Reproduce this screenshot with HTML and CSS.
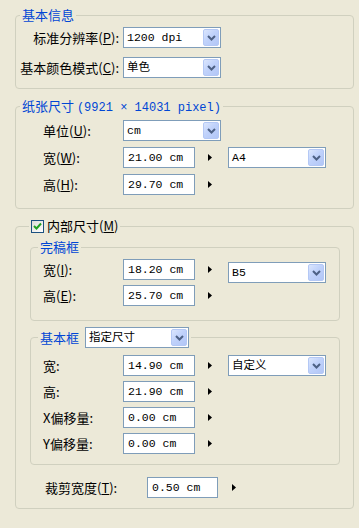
FILE: index.html
```html
<!DOCTYPE html>
<html lang="zh">
<head>
<meta charset="utf-8">
<link rel="stylesheet" href="styles.css">
</head>
<body>
<div class="page">

  <fieldset class="group g1">
    <legend class="lg">基本信息</legend>
    <div class="body b1">
      <div class="row">
        <span class="rlabel">标准分辨率(<u>P</u>):</span>
        <span class="select w98"><span class="val">1200 dpi</span><span class="btn"><svg width="9" height="6" viewBox="0 0 9 6"><path d="M1 1 L4.5 4.5 L8 1" fill="none" stroke="#4d6185" stroke-width="2"/></svg></span></span>
      </div>
      <div class="row">
        <span class="rlabel">基本颜色模式(<u>C</u>):</span>
        <span class="select w98"><span class="val">单色</span><span class="btn"><svg width="9" height="6" viewBox="0 0 9 6"><path d="M1 1 L4.5 4.5 L8 1" fill="none" stroke="#4d6185" stroke-width="2"/></svg></span></span>
      </div>
    </div>
  </fieldset>

  <fieldset class="group g2">
    <legend class="lg">纸张尺寸 <span class="mono">(9921 × 14031 pixel)</span></legend>
    <div class="body b2">
      <div class="row">
        <span class="label">单位(<u>U</u>):</span>
        <span class="select w98"><span class="val">cm</span><span class="btn"><svg width="9" height="6" viewBox="0 0 9 6"><path d="M1 1 L4.5 4.5 L8 1" fill="none" stroke="#4d6185" stroke-width="2"/></svg></span></span>
      </div>
      <div class="row">
        <span class="label">宽(<u>W</u>):</span>
        <span class="input">21.00 cm</span>
        <span class="arrow"><svg width="4" height="7" viewBox="0 0 4 7"><polygon points="0,0 4,3.5 0,7" fill="#000"/></svg></span>
        <span class="select w98"><span class="val">A4</span><span class="btn"><svg width="9" height="6" viewBox="0 0 9 6"><path d="M1 1 L4.5 4.5 L8 1" fill="none" stroke="#4d6185" stroke-width="2"/></svg></span></span>
      </div>
      <div class="row">
        <span class="label">高(<u>H</u>):</span>
        <span class="input">29.70 cm</span>
        <span class="arrow"><svg width="4" height="7" viewBox="0 0 4 7"><polygon points="0,0 4,3.5 0,7" fill="#000"/></svg></span>
      </div>
    </div>
  </fieldset>

  <fieldset class="group g3">
    <legend class="lg lg-check"><span class="check"><svg width="9" height="9" viewBox="0 0 9 9"><path d="M1 4 L3.5 6.5 L8 1.5" fill="none" stroke="#21a121" stroke-width="2"/></svg></span><span class="ctext">内部尺寸(<u>M</u>)</span></legend>
    <div class="body b3">

      <fieldset class="group inner g-wan">
        <legend class="lg lg-inner">完稿框</legend>
        <div class="body bi">
          <div class="row">
            <span class="label">宽(<u>I</u>):</span>
            <span class="input">18.20 cm</span>
            <span class="arrow"><svg width="4" height="7" viewBox="0 0 4 7"><polygon points="0,0 4,3.5 0,7" fill="#000"/></svg></span>
            <span class="select w98 shift"><span class="val">B5</span><span class="btn"><svg width="9" height="6" viewBox="0 0 9 6"><path d="M1 1 L4.5 4.5 L8 1" fill="none" stroke="#4d6185" stroke-width="2"/></svg></span></span>
          </div>
          <div class="row">
            <span class="label">高(<u>E</u>):</span>
            <span class="input">25.70 cm</span>
            <span class="arrow"><svg width="4" height="7" viewBox="0 0 4 7"><polygon points="0,0 4,3.5 0,7" fill="#000"/></svg></span>
          </div>
        </div>
      </fieldset>

      <fieldset class="group inner g-ji">
        <legend class="lg lg-inner lg-sel"><span class="ltext">基本框</span><span class="select w104"><span class="val">指定尺寸</span><span class="btn"><svg width="9" height="6" viewBox="0 0 9 6"><path d="M1 1 L4.5 4.5 L8 1" fill="none" stroke="#4d6185" stroke-width="2"/></svg></span></span></legend>
        <div class="body bj">
          <div class="row">
            <span class="label">宽:</span>
            <span class="input">14.90 cm</span>
            <span class="arrow"><svg width="4" height="7" viewBox="0 0 4 7"><polygon points="0,0 4,3.5 0,7" fill="#000"/></svg></span>
            <span class="select w98"><span class="val">自定义</span><span class="btn"><svg width="9" height="6" viewBox="0 0 9 6"><path d="M1 1 L4.5 4.5 L8 1" fill="none" stroke="#4d6185" stroke-width="2"/></svg></span></span>
          </div>
          <div class="row">
            <span class="label">高:</span>
            <span class="input">21.90 cm</span>
            <span class="arrow"><svg width="4" height="7" viewBox="0 0 4 7"><polygon points="0,0 4,3.5 0,7" fill="#000"/></svg></span>
          </div>
          <div class="row">
            <span class="label">X偏移量:</span>
            <span class="input">0.00 cm</span>
            <span class="arrow"><svg width="4" height="7" viewBox="0 0 4 7"><polygon points="0,0 4,3.5 0,7" fill="#000"/></svg></span>
          </div>
          <div class="row">
            <span class="label">Y偏移量:</span>
            <span class="input">0.00 cm</span>
            <span class="arrow"><svg width="4" height="7" viewBox="0 0 4 7"><polygon points="0,0 4,3.5 0,7" fill="#000"/></svg></span>
          </div>
        </div>
      </fieldset>

      <div class="row crop">
        <span class="clabel">裁剪宽度(<u>T</u>):</span>
        <span class="input w71">0.50 cm</span>
        <span class="arrow"><svg width="4" height="7" viewBox="0 0 4 7"><polygon points="0,0 4,3.5 0,7" fill="#000"/></svg></span>
      </div>
    </div>
  </fieldset>

</div>
</body>
</html>
```

FILE: styles.css
```css
html, body {
  margin: 0;
  padding: 0;
  background: #ece9d8;
}
body {
  font-family: "Noto Sans CJK SC", sans-serif;
  font-size: 13px;
  line-height: 14px;
  color: #000;
}
.page {
  padding: 8px 5px 0 15px;
  width: 339px;
}
.group {
  margin: 0;
  padding: 0;
  border: 1px solid #d0d0bf;
  border-radius: 4px;
  min-width: 0;
}
.g2, .g3 {
  margin-top: 10px;
}
.lg {
  margin-left: 4px;
  padding: 0 2px;
  color: #0046d5;
  height: 14px;
  line-height: 14px;
  white-space: nowrap;
}
.mono {
  font-family: "Liberation Mono", monospace;
  font-size: 12px;
}
.lg-check {
  margin-left: 13px;
  color: #000;
  display: flex;
  align-items: center;
}
.check {
  width: 11px;
  height: 11px;
  border: 1px solid #1c5180;
  background: linear-gradient(135deg, #dcdcd7, #fff);
  display: inline-flex;
  align-items: center;
  justify-content: center;
  margin-right: 3px;
}
.ctext {
  line-height: 14px;
}
.body {
  display: flex;
  flex-direction: column;
}
.b1 {
  padding: 5px 0 10px 0;
  gap: 9px;
}
.b2 {
  padding: 7px 0 13px 27px;
  gap: 6px;
}
.b3 {
  padding: 7px 13px 10px 14px;
}
.inner {
  border-radius: 4px;
}
.lg-inner {
  margin-left: 7px;
}
.g-ji {
  margin-top: 6px;
}
.lg-sel {
  height: 21px;
  display: flex;
  align-items: center;
  gap: 6px;
}
.bi {
  padding: 5px 0 14px 12px;
  gap: 5px;
}
.bj {
  padding: 7px 0 10px 12px;
  gap: 5px;
}
.row {
  display: flex;
  align-items: center;
  height: 21px;
}
.rlabel {
  width: 103px;
  display: flex;
  justify-content: flex-end;
  white-space: nowrap;
  margin-right: 4px;
}
.label {
  width: 80px;
  white-space: nowrap;
}
.crop {
  margin-top: 12px;
  padding-left: 15px;
}
.clabel {
  width: 102px;
  white-space: nowrap;
}
.input {
  box-sizing: border-box;
  width: 72px;
  height: 21px;
  border: 1px solid #7f9db9;
  background: #fff;
  padding-left: 4px;
  font-family: "Liberation Mono", "Noto Sans CJK SC", monospace;
  font-size: 11.5px;
  display: flex;
  align-items: center;
  white-space: nowrap;
  overflow: hidden;
}
.w71 {
  width: 71px;
}
.arrow {
  display: inline-flex;
  margin-left: 13px;
  width: 4px;
  margin-right: 16px;
}
.crop .arrow {
  margin-left: 14px;
}
.select {
  box-sizing: border-box;
  height: 21px;
  border: 1px solid #7f9db9;
  background: #fff;
  display: flex;
  align-items: center;
  padding: 1px;
  font-family: "Liberation Mono", "Noto Sans CJK SC", monospace;
  font-size: 11.5px;
}
.select .val {
  flex: 1;
  padding-left: 2px;
  white-space: nowrap;
  overflow: hidden;
}
.w98 {
  width: 98px;
}
.w104 {
  width: 104px;
  color: #000;
}
.shift {
  margin-top: 6px;
}
.btn {
  box-sizing: border-box;
  width: 16px;
  height: 17px;
  border: 1px solid #b4c8f5;
  border-radius: 2px;
  background: linear-gradient(135deg, #dbe6fd 0%, #c0d2fb 45%, #b2c6f6 100%);
  display: flex;
  align-items: center;
  justify-content: center;
}
.ltext {
  color: #0046d5;
}
```
